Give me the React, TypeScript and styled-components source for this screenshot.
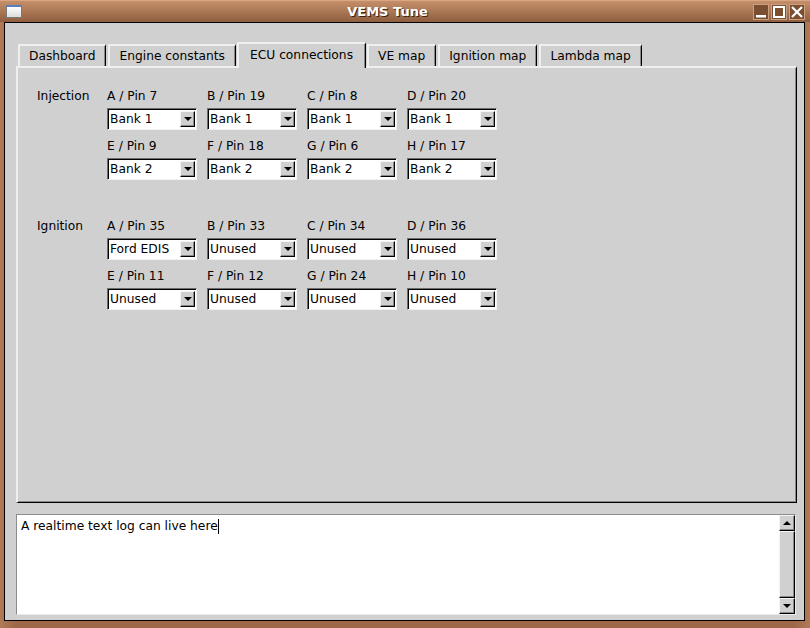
import React from 'react';
import styled, { createGlobalStyle } from 'styled-components';

type Slot = {
    pin: string
    value: string
}

const injection: Array<Slot> = [
    { pin: 'A / Pin 7', value: 'Bank 1' },
    { pin: 'B / Pin 19', value: 'Bank 1' },
    { pin: 'C / Pin 8', value: 'Bank 1' },
    { pin: 'D / Pin 20', value: 'Bank 1' },
    { pin: 'E / Pin 9', value: 'Bank 2' },
    { pin: 'F / Pin 18', value: 'Bank 2' },
    { pin: 'G / Pin 6', value: 'Bank 2' },
    { pin: 'H / Pin 17', value: 'Bank 2' },
]

const ignition: Array<Slot> = [
    { pin: 'A / Pin 35', value: 'Ford EDIS' },
    { pin: 'B / Pin 33', value: 'Unused' },
    { pin: 'C / Pin 34', value: 'Unused' },
    { pin: 'D / Pin 36', value: 'Unused' },
    { pin: 'E / Pin 11', value: 'Unused' },
    { pin: 'F / Pin 12', value: 'Unused' },
    { pin: 'G / Pin 24', value: 'Unused' },
    { pin: 'H / Pin 10', value: 'Unused' },
]

const tabs = ['Dashboard', 'Engine constants', 'ECU connections', 'VE map', 'Ignition map', 'Lambda map']

const App = () => {
    const activeTab = 'ECU connections'

    const renderGroup = (name: string, slots: Array<Slot>) => {
        return (
            <Section>
                <GroupName>{name}</GroupName>
                <CellGrid>
                    {slots.map((s) => {
                        return (
                            <Cell key={s.pin}>
                                <PinLabel>{s.pin}</PinLabel>
                                <Combo>
                                    <ComboText>{s.value}</ComboText>
                                    <ComboButton>
                                        <DownArrow />
                                    </ComboButton>
                                </Combo>
                            </Cell>
                        )
                    })}
                </CellGrid>
            </Section>
        )
    }

    return (
        <>
            <GlobalStyle />
            <Window>
                <TitleBar>
                    <WindowIcon />
                    <Title>VEMS Tune</Title>
                    <TitleButtons>
                        <TitleButton>
                            <svg width="14" height="14" viewBox="0 0 14 14">
                                <rect x="2" y="10" width="10" height="2.5" fill="#fff" />
                            </svg>
                        </TitleButton>
                        <TitleButton>
                            <svg width="14" height="14" viewBox="0 0 14 14">
                                <rect x="2" y="2" width="10" height="10" fill="none" stroke="#fff" strokeWidth="2" />
                            </svg>
                        </TitleButton>
                        <TitleButton>
                            <svg width="14" height="14" viewBox="0 0 14 14">
                                <path d="M2 2 L12 12 M12 2 L2 12" stroke="#fff" strokeWidth="2.2" />
                            </svg>
                        </TitleButton>
                    </TitleButtons>
                </TitleBar>
                <FrameBody>
                    <Client>
                        <Notebook>
                            <TabBar>
                                {tabs.map((t) => {
                                    return (
                                        <Tab key={t} selected={t === activeTab}>{t}</Tab>
                                    )
                                })}
                            </TabBar>
                            <Pane>
                                {renderGroup('Injection', injection)}
                                {renderGroup('Ignition', ignition)}
                            </Pane>
                        </Notebook>
                        <LogBox>
                            <LogText>
                                A realtime text log can live here<Caret />
                            </LogText>
                            <ScrollBar>
                                <ScrollButton>
                                    <UpArrow />
                                </ScrollButton>
                                <ScrollThumb />
                                <ScrollButton>
                                    <DownArrow />
                                </ScrollButton>
                            </ScrollBar>
                        </LogBox>
                    </Client>
                </FrameBody>
            </Window>
        </>
    )
}

const GlobalStyle = createGlobalStyle`
    html, body {
        margin: 0;
        padding: 0;
    }
    body {
        font-family: "DejaVu Sans", "Noto Sans", sans-serif;
        font-size: 12.25px;
        color: #000;
    }
`

const Window = styled.div`
    width: 810px;
    height: 628px;
    display: flex;
    flex-direction: column;
    background: #a46f4d;
    box-sizing: border-box;
`

const TitleBar = styled.div`
    height: 22px;
    flex: none;
    display: flex;
    align-items: center;
    padding: 0 5px 0 6px;
    box-sizing: border-box;
    background: linear-gradient(#c68f6a, #8e5e3f);
    border-top: 1px solid #d9a684;
`

const WindowIcon = styled.div`
    width: 14px;
    height: 10px;
    margin-top: -1px;
    border: 1px solid #7a7a7a;
    border-top: 2px solid #5b7fb8;
    background: linear-gradient(#ffffff, #dcdcdc);
`

const Title = styled.div`
    flex: 1;
    text-align: center;
    color: #fff;
    font-weight: bold;
    font-size: 13px;
    text-shadow: 1px 1px 0 #3c2313;
`

const TitleButtons = styled.div`
    display: flex;
    gap: 2px;
`

const TitleButton = styled.div`
    width: 16px;
    height: 16px;
    box-sizing: border-box;
    background: #7a4e31;
    border: 1px solid #caa081;
    display: flex;
    align-items: center;
    justify-content: center;
`

const FrameBody = styled.div`
    flex: 1;
    display: flex;
    padding: 0 5px 7px 4px;
    background: linear-gradient(90deg, #b07a56, #9c6848 2%, #9c6848 98%, #b07a56);
`

const Client = styled.div`
    flex: 1;
    display: flex;
    flex-direction: column;
    background: #d0d0d0;
    border: 1px solid #000;
    padding: 19px 7px 5px 11px;
`

const Notebook = styled.div`
    flex: 1;
    display: flex;
    flex-direction: column;
`

const TabBar = styled.div`
    height: 24px;
    display: flex;
    align-items: flex-end;
    gap: 2px;
    padding-left: 2px;
`

const Tab = styled.div<{ selected: boolean }>`
    position: relative;
    z-index: ${(p) => (p.selected ? 1 : 0)};
    height: ${(p) => (p.selected ? '26px' : '22px')};
    margin: ${(p) => (p.selected ? '0 -1px -2px -1px' : '0')};
    padding: ${(p) => (p.selected ? '0 12px 2px 11px' : '0 10px 0 9px')};
    box-sizing: border-box;
    display: flex;
    align-items: center;
    background: #d0d0d0;
    border-top: 2px solid #efefef;
    border-left: 2px solid #efefef;
    border-right: 1px solid #000;
    box-shadow: inset -1px 0 0 #8a8a8a;
    white-space: nowrap;
`

const Pane = styled.div`
    flex: 1;
    border-top: 2px solid #efefef;
    border-left: 2px solid #efefef;
    border-right: 1px solid #000;
    border-bottom: 1px solid #000;
    box-shadow: inset -1px -1px 0 #8a8a8a;
    padding: 20px 0 0 19px;
    display: flex;
    flex-direction: column;
    gap: 38px;
`

const Section = styled.div`
    display: flex;
`

const GroupName = styled.div`
    width: 70px;
    line-height: 16px;
`

const CellGrid = styled.div`
    display: grid;
    grid-template-columns: repeat(4, 90px);
    column-gap: 10px;
    row-gap: 8px;
`

const Cell = styled.div`
    display: flex;
    flex-direction: column;
    gap: 4px;
`

const PinLabel = styled.div`
    line-height: 16px;
    white-space: nowrap;
`

const Combo = styled.div`
    height: 22px;
    box-sizing: border-box;
    display: flex;
    align-items: center;
    background: #fff;
    border: 1px solid;
    border-color: #6e6e6e #f2f2f2 #f2f2f2 #6e6e6e;
    box-shadow: inset 1px 1px 0 #000;
    padding: 0 1px 0 2px;
`

const ComboText = styled.span`
    flex: 1;
    white-space: nowrap;
    overflow: hidden;
`

const ComboButton = styled.div`
    width: 15px;
    height: 16px;
    box-sizing: border-box;
    background: #d0d0d0;
    border: 1px solid;
    border-color: #f4f4f4 #000 #000 #f4f4f4;
    box-shadow: inset -1px -1px 0 #8a8a8a;
    display: flex;
    align-items: center;
    justify-content: center;
`

const DownArrow = styled.div`
    width: 0;
    height: 0;
    border-left: 4px solid transparent;
    border-right: 4px solid transparent;
    border-top: 4px solid #000;
`

const UpArrow = styled.div`
    width: 0;
    height: 0;
    border-left: 4px solid transparent;
    border-right: 4px solid transparent;
    border-bottom: 4px solid #000;
`

const LogBox = styled.div`
    margin-top: 11px;
    height: 101px;
    box-sizing: border-box;
    display: flex;
    background: #fff;
    border: 1px solid;
    border-color: #8c8c8c #ececec #ececec #8c8c8c;
    margin-right: 1px;
`

const LogText = styled.div`
    flex: 1;
    padding: 4px 4px;
    line-height: 15px;
    white-space: nowrap;
`

const Caret = styled.span`
    display: inline-block;
    width: 1px;
    height: 15px;
    background: #000;
    vertical-align: top;
`

const ScrollBar = styled.div`
    width: 16px;
    display: flex;
    flex-direction: column;
    background: #d0d0d0;
`

const ScrollButton = styled.div`
    height: 16px;
    box-sizing: border-box;
    border: 1px solid;
    border-color: #f4f4f4 #000 #000 #f4f4f4;
    box-shadow: inset -1px -1px 0 #8a8a8a;
    display: flex;
    align-items: center;
    justify-content: center;
`

const ScrollThumb = styled.div`
    flex: 1;
    box-sizing: border-box;
    border: 1px solid;
    border-color: #f4f4f4 #000 #000 #f4f4f4;
    box-shadow: inset -1px -1px 0 #8a8a8a;
`

export default App
